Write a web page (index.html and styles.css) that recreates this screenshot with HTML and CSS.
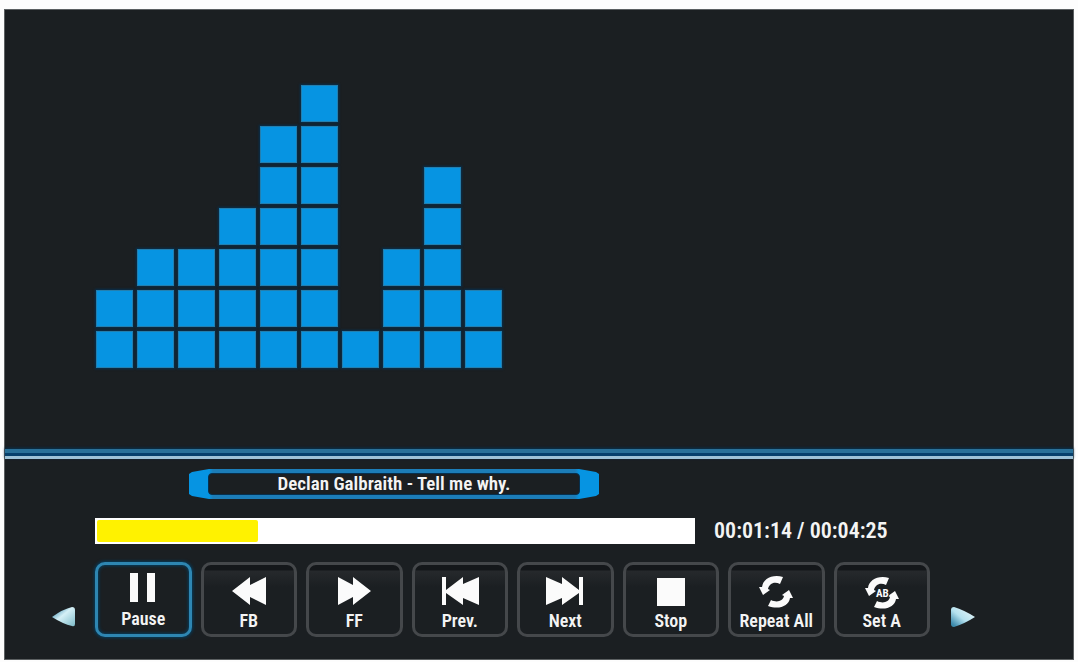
FILE: index.html
```
<!DOCTYPE html>
<html lang="en">
<head>
<meta charset="utf-8">
<meta name="viewport" content="width=device-width, initial-scale=1">
<title>Music player</title>
<link rel="stylesheet" href="styles.css">
</head>
<body>
<main class="screen">
  <section class="visualizer" aria-label="Spectrum">
    <div class="bar"><i></i><i></i></div>
    <div class="bar"><i></i><i></i><i></i></div>
    <div class="bar"><i></i><i></i><i></i></div>
    <div class="bar"><i></i><i></i><i></i><i></i></div>
    <div class="bar"><i></i><i></i><i></i><i></i><i></i><i></i></div>
    <div class="bar"><i></i><i></i><i></i><i></i><i></i><i></i><i></i></div>
    <div class="bar"><i></i></div>
    <div class="bar"><i></i><i></i><i></i></div>
    <div class="bar"><i></i><i></i><i></i><i></i><i></i></div>
    <div class="bar"><i></i><i></i></div>
  </section>
  <div class="divider"></div>
  <section class="player">
    <div class="track"><h1 class="track-name">Declan Galbraith - Tell me why.</h1></div>
    <div class="timeline">
      <progress class="progress" value="27" max="100" aria-label="Playback position"></progress>
      <span class="time">00:01:14 / 00:04:25</span>
    </div>
    <div class="controls">
      <button class="scroll scroll-left" aria-label="Scroll left">
        <svg width="24" height="22" viewBox="0 0 24 22"><defs><linearGradient id="gl" x1="0" x2="1" y1="0" y2="1"><stop offset="0.1" stop-color="#3f8db0"/><stop offset="0.45" stop-color="#d5f0f7"/><stop offset="1" stop-color="#7dbac8"/></linearGradient></defs><path d="M1 11Q12 3 21 1 24 1 24 4V18Q24 21 21 20 12 18 1 11Z" fill="url(#gl)"/></svg>
      </button>
      <div class="buttons">
        <button class="key key-active"><svg class="icon" viewBox="0 0 40 34"><path d="M7 2h8v29H7zM24 2h8v29h-8z"/></svg><span>Pause</span></button>
        <button class="key"><svg class="icon" viewBox="0 0 40 34"><path d="M3 18 21 4v8L37 4v28L21 24v8Z"/></svg><span>FB</span></button>
        <button class="key"><svg class="icon" viewBox="0 0 40 34"><path d="M37 18 19 4v8L4 4v28L19 24v8Z"/></svg><span>FF</span></button>
        <button class="key"><svg class="icon" viewBox="0 0 40 34"><path d="M2 4h4v13L23 4v7L39 4v28L23 25v7L6 20v12H2Z"/></svg><span>Prev.</span></button>
        <button class="key"><svg class="icon" viewBox="0 0 40 34"><path d="M38 4h-4v13L17 4v7L1 4v28L17 25v7L34 20v12h4Z"/></svg><span>Next</span></button>
        <button class="key"><svg class="icon" viewBox="0 0 40 34"><path d="M6 5h28v28H6z"/></svg><span>Stop</span></button>
        <button class="key"><svg class="icon" viewBox="0 0 40 34"><path d="M27 4C16 1 7 6 6 14L3 14 7 22 14 17 12 16C13 11 18 8 24 11ZM12 33C23 37 33 33 34 25L37 25 33 17 26 22 28 23C27 28 21 30 15 27Z"/></svg><span>Repeat All</span></button>
        <button class="key"><svg class="icon" viewBox="0 0 40 34"><path d="M27 5C16 2 7 7 6 15L3 15 7 23 14 18 12 17C13 12 18 9 24 12ZM12 34C23 38 33 34 34 26L37 26 33 18 26 23 28 24C27 29 21 31 15 28Z"/><text class="icon-text" x="14" y="24">AB</text></svg><span>Set A</span></button>
      </div>
      <button class="scroll scroll-right" aria-label="Scroll right">
        <svg width="26" height="22" viewBox="0 0 26 22"><defs><linearGradient id="gr" x1="0" x2="1" y1="1" y2="0"><stop offset="0.1" stop-color="#3d8aac"/><stop offset="0.45" stop-color="#b4e1ef"/><stop offset="0.9" stop-color="#e5f5f8"/></linearGradient></defs><path d="M1 4Q1 1 4 1 14 4 25 11 14 18 4 21 1 21 1 18Z" fill="url(#gr)"/></svg>
      </button>
    </div>
  </section>
</main>
</body>
</html>
```
FILE: styles.css
```
* { box-sizing: border-box; }

body {
  margin: 0;
  padding: 9px 4px 2px;
  min-height: 100vh;
  display: flex;
  background: #fdfdfd;
  color: #f4f4f4;
  font-family: "Liberation Sans Narrow", "Arial Narrow", "Roboto Condensed", Roboto, sans-serif;
}

.screen {
  flex: 1;
  display: flex;
  flex-direction: column;
  border: 1px solid #5c6062;
  background: #1b1f22;
}

.visualizer {
  flex: 1;
  display: flex;
  align-items: flex-end;
  gap: 4px;
  padding: 0 91px 81px;
}

.bar { display: flex; flex-direction: column; gap: 4px; }

.bar i {
  width: 37px;
  height: 37px;
  border: 1px solid #247fae;
  background: #0694e2;
  box-shadow: 0 0 2px 1px #06304f;
}

.divider {
  height: 10px;
  border-top: 4px solid #2a7199;
  border-bottom: 3px solid #9fc3d8;
  background: #07406c;
  box-shadow: 0 -1px 3px #06304f;
}

.player { padding: 10px 46px 22px; }

.track {
  width: 410px;
  max-width: 100%;
  margin-left: 138px;
  padding: 4px 19px;
  background: linear-gradient(90deg, #0694e2 20px, #1c7db8 24px, #1c7db8 386px, #0694e2 390px);
  clip-path: polygon(0 5px, 3px 3px, 20px 0, 390px 0, 407px 3px, 100% 5px, 100% 25px, 407px 27px, 390px 100%, 20px 100%, 3px 27px, 0 25px);
}

.track-name {
  margin: 0;
  border: 1px solid #06304f;
  border-radius: 4px;
  background: #1b1f22;
  font-size: 19px;
  font-weight: 600;
  line-height: 20px;
  text-align: center;
}

.timeline {
  display: flex;
  align-items: center;
  gap: 19px;
  margin: 19px 0 18px 44px;
}

.progress {
  flex: 0 1 600px;
  height: 26px;
  padding: 2px;
  border: 0;
  appearance: none;
  background: #fff;
}

.progress::-webkit-progress-bar { background: #fff; }
.progress::-webkit-progress-value { background: #fff200; border-radius: 2px; }

.time { font-size: 22px; font-weight: 600; line-height: 26px; white-space: nowrap; }

.controls { display: flex; align-items: center; }

.buttons {
  flex: 1;
  display: grid;
  grid-template-columns: repeat(8, 1fr);
  gap: 9px;
  margin: 0 20px;
}

button { padding: 0; border: 0; background: none; color: inherit; font: inherit; }

.scroll { display: flex; padding-top: 34px; }
.scroll-right { margin-right: 51px; }

.key {
  display: flex;
  flex-direction: column;
  align-items: center;
  height: 75px;
  padding-top: 8px;
  border: 3px solid #45484b;
  border-radius: 10px;
  background: linear-gradient(#14171a 5px, #26292c 6px, #1b1f22 22px);
  font-size: 18px;
  font-weight: 600;
  line-height: 20px;
  white-space: nowrap;
}

.key-active {
  padding-top: 6px;
  border-color: #2e86b2;
  background: #1b1f22;
  box-shadow: 0 0 3px 1px #063c5c, inset 0 0 3px 1px #063c5c;
}

.icon { flex: none; width: 40px; height: 34px; margin-bottom: 4px; overflow: visible; fill: #fbfbfb; }
.icon-text { font-size: 11px; font-weight: 700; stroke: #1b1f22; stroke-width: 2px; paint-order: stroke; }
```
